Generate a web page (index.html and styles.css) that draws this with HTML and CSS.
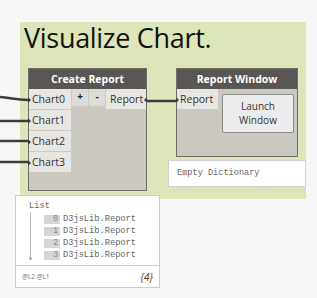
FILE: index.html
```html
<!DOCTYPE html>
<html>
<head>
<meta charset="utf-8">
<link rel="stylesheet" href="styles.css">
</head>
<body>
<div class="canvas">
  <div class="group">
    <div class="group-title">Visualize Chart.</div>
  </div>

  <svg class="wires" width="317" height="298" viewBox="0 0 317 298">
    <path d="M0 97 C 12 98, 16 100, 28 100" />
    <path d="M0 121 L 28 121" />
    <path d="M0 141 L 28 141" />
    <path d="M0 162 L 28 162" />
    <path d="M147 101 L 176 101" />
  </svg>

  <div class="node node-create">
    <div class="node-head">Create Report</div>
    <div class="node-body">
      <div class="inputs">
        <div class="port in">Chart0</div>
        <div class="port in">Chart1</div>
        <div class="port in">Chart2</div>
        <div class="port in">Chart3</div>
      </div>
      <div class="btns">
        <div class="pm">+</div>
        <div class="pm">-</div>
      </div>
      <div class="outputs">
        <div class="port out">Report</div>
      </div>
    </div>
  </div>

  <div class="node node-window">
    <div class="node-head">Report Window</div>
    <div class="node-body">
      <div class="inputs">
        <div class="port in">Report</div>
      </div>
      <div class="launch">Launch<br>Window</div>
    </div>
  </div>

  <div class="preview">Empty Dictionary</div>

  <div class="watch">
    <div class="watch-main">
      <div class="list-label">List</div>
      <div class="list-tree">
        <div class="item"><span class="idx">0</span><span class="val">D3jsLib.Report</span></div>
        <div class="item"><span class="idx">1</span><span class="val">D3jsLib.Report</span></div>
        <div class="item"><span class="idx">2</span><span class="val">D3jsLib.Report</span></div>
        <div class="item"><span class="idx">3</span><span class="val">D3jsLib.Report</span></div>
      </div>
    </div>
    <div class="watch-foot">
      <span class="levels">@L2 @L1</span>
      <span class="count">{4}</span>
    </div>
  </div>
</div>
</body>
</html>
```

FILE: styles.css
```css
* { box-sizing: border-box; }
html, body { margin: 0; padding: 0; }
body {
  background: #f7f7f7;
  font-family: "Open Sans", "Noto Sans", sans-serif;
}
.canvas {
  position: relative;
  width: 317px;
  height: 298px;
  overflow: hidden;
}
.group {
  position: absolute;
  left: 20px;
  top: 22px;
  width: 286px;
  height: 177px;
  background: #dce6b9;
}
.group-title {
  padding: 0 0 0 4px;
  font-size: 27px;
  line-height: 32px;
  margin-top: 0;
  color: #111;
  letter-spacing: -0.3px;
}
.wires {
  position: absolute;
  left: 0;
  top: 0;
}
.wires path {
  fill: none;
  stroke: #3d3d3d;
  stroke-width: 2.5;
}
.node {
  position: absolute;
  display: flex;
  flex-direction: column;
  border: 1px solid #6f6c69;
  background: #cbc7c1;
}
.node-create { left: 28px; top: 68px; width: 119px; height: 123px; }
.node-window { left: 176px; top: 68px; width: 122px; height: 89px; }
.node-head {
  height: 20px;
  background: #5a5654;
  color: #fff;
  font-weight: 700;
  font-size: 10.5px;
  line-height: 20px;
  text-align: center;
}
.node-body {
  display: flex;
  flex: 1;
  align-items: flex-start;
}
.inputs {
  display: flex;
  flex-direction: column;
  gap: 1px;
}
.node-create .inputs { width: 42px; }
.node-window .inputs { width: 41px; }
.port {
  position: relative;
  height: 20px;
  background: #e8e6e2;
  color: #333;
  font-size: 10.5px;
  line-height: 20px;
  padding-left: 3px;
}
.port.in::before {
  content: "";
  position: absolute;
  left: -1px;
  top: 8px;
  width: 0; height: 0;
  border-top: 3px solid transparent;
  border-bottom: 3px solid transparent;
  border-left: 3px solid #3d3d3d;
}
.port.out::after {
  content: "";
  position: absolute;
  right: -1px;
  top: 8px;
  width: 0; height: 0;
  border-top: 3px solid transparent;
  border-bottom: 3px solid transparent;
  border-right: 3px solid #3d3d3d;
}
.btns {
  display: flex;
  gap: 1px;
  margin-left: 1px;
}
.pm {
  width: 16px;
  height: 17px;
  background: #dedcd8;
  color: #222;
  font-size: 10px;
  font-weight: 700;
  line-height: 15px;
  text-align: center;
}
.outputs {
  margin-left: 1px;
  flex: 1;
}
.outputs .port { padding-left: 4px; }
.launch {
  margin: 5px 0 0 4px;
  width: 72px;
  height: 39px;
  background: #ececec;
  border: 1px solid #8a8a8a;
  border-radius: 2px;
  font-size: 10px;
  line-height: 14px;
  text-align: center;
  color: #333;
  padding-top: 4px;
}
.preview {
  position: absolute;
  left: 168px;
  top: 160px;
  width: 138px;
  height: 27px;
  background: #fff;
  border: 1px solid #d2d2d2;
  font-family: "Liberation Mono", "DejaVu Sans Mono", monospace;
  font-size: 8.6px;
  color: #666;
  line-height: 25px;
  padding-left: 8px;
}
.watch {
  position: absolute;
  left: 15px;
  top: 195px;
  width: 145px;
  height: 93px;
  background: #fff;
  border: 1px solid #cdcdcd;
  display: flex;
  flex-direction: column;
}
.watch-main {
  height: 70px;
  border-bottom: 1px solid #cdcdcd;
  padding: 5px 0 0 13px;
  font-family: "Liberation Mono", "DejaVu Sans Mono", monospace;
  font-size: 8.7px;
  color: #666;
}
.list-label {
  line-height: 11px;
}
.list-tree {
  position: relative;
  margin-left: 1px;
  padding-left: 13px;
  padding-top: 1px;
  border-left: 1px solid #bcbcbc;
  height: 46px;
}
.list-tree::after {
  content: "";
  position: absolute;
  left: -2px;
  bottom: -2px;
  width: 3px;
  height: 3px;
  border-radius: 50%;
  background: #aaa;
}
.item {
  display: flex;
  align-items: center;
  height: 12px;
}
.idx {
  width: 16px;
  height: 9px;
  background: #d6d6d6;
  color: #888;
  text-align: right;
  padding-right: 2px;
  line-height: 9px;
  margin-right: 3px;
  font-size: 8.5px;
}
.val { line-height: 12px; }
.watch-foot {
  flex: 1;
  display: flex;
  align-items: center;
  justify-content: space-between;
  padding: 0 6px 0 6px;
}
.levels {
  font-family: "Open Sans", sans-serif;
  font-size: 6.5px;
  color: #777;
}
.count {
  font-family: "Open Sans", sans-serif;
  font-style: italic;
  font-size: 10px;
  color: #6a2a20;
}
```
